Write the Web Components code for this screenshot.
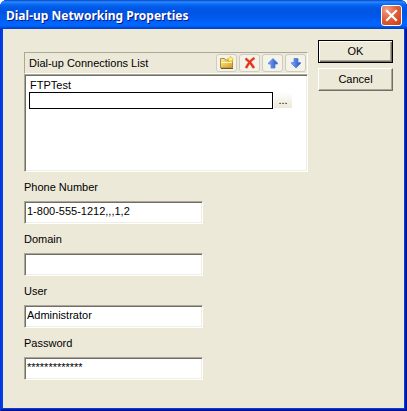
<!DOCTYPE html>
<html lang="en">
<head>
<meta charset="utf-8">
<title>Dial-up Networking Properties</title>
<style>
  body {
    margin: 0;
    background: #fff;
    color: #000;
    font-family: "Liberation Sans", Arial, sans-serif;
    font-size: 11px;
    line-height: 14px;
  }
  .fields {
    display: grid;
    gap: 8px;
    margin-top: 8px;
  }
</style>
</head>
<body>
<dialog-window caption="Dial-up Networking Properties">
  <connection-list label="Dial-up Connections List" item="FTPTest"></connection-list>
  <div class="fields">
    <text-field label="Phone Number" value="1-800-555-1212,,,1,2"></text-field>
    <text-field label="Domain"></text-field>
    <text-field label="User" value="Administrator"></text-field>
    <text-field label="Password" value="*************"></text-field>
  </div>
  <push-button slot="actions" default>OK</push-button>
  <push-button slot="actions">Cancel</push-button>
</dialog-window>

<script>
// Window frame with title bar
class DialogWindow extends HTMLElement {
  constructor() {
    super();
    const shadowRoot = this.attachShadow({ mode: "open" });
    shadowRoot.innerHTML = `
      <style>
        :host {
          display: flex;
          flex-direction: column;
          box-sizing: border-box;
          min-height: 100vh;
          padding: 0 3px 3px;
          background: #0040e6;
          box-shadow: inset 1px 0 #0831d9, inset -1px -1px #00138c, inset -2px -2px #001ea0;
          border-radius: 7px 7px 0 0;
          overflow: hidden;
        }
        header {
          display: flex;
          align-items: center;
          justify-content: space-between;
          height: 29px;
          margin: 0 -3px;
          padding: 2px 5px 0 6px;
          box-sizing: border-box;
          background: linear-gradient(#0842c4 0, #2b8bff 2px, #0a6cf5 4px, #0058e6 8px, #0054e3 13px, #005cf2 19px, #0066ff 24px, #0062f8 26px, #0048d0 28px, #003dc4 29px);
        }
        h1 {
          margin: 0;
          color: #fff;
          font: bold 12px/18px "Noto Sans", "Open Sans", sans-serif;
          text-shadow: 1px 1px #0a1883;
          white-space: nowrap;
        }
        .close {
          width: 21px;
          height: 21px;
          padding: 0;
          border: 1px solid #fff;
          border-radius: 3px;
          background: radial-gradient(circle at 25% 20%, #f0a088, #e2603c 45%, #c63c14);
        }
        .close svg {
          display: block;
          width: 19px;
          height: 19px;
        }
        main {
          flex: 1;
          display: flex;
          gap: 10px;
          padding: 11px 11px 20px 21px;
          background: #ece9d8;
        }
        .content {
          flex: 1;
          min-width: 0;
          padding-top: 12px;
        }
        .actions {
          display: flex;
          flex-direction: column;
          gap: 5px;
          width: 75px;
        }
      </style>
      <header>
        <h1></h1>
        <button class="close" type="button" aria-label="Close">
          <svg viewBox="0 0 19 19"><path d="M5 5l9 9M14 5l-9 9" stroke="#fff" stroke-width="2.2" stroke-linecap="square"/></svg>
        </button>
      </header>
      <main>
        <div class="content"><slot></slot></div>
        <div class="actions"><slot name="actions"></slot></div>
      </main>
    `;
    shadowRoot.querySelector("h1").textContent = this.getAttribute("caption") || "";
  }
}
customElements.define("dialog-window", DialogWindow);

// Classic raised button
class PushButton extends HTMLElement {
  constructor() {
    super();
    const shadowRoot = this.attachShadow({ mode: "open" });
    shadowRoot.innerHTML = `
      <style>
        :host {
          display: block;
        }
        button {
          display: block;
          width: 100%;
          height: 23px;
          padding: 0 0 2px;
          border: 1px solid;
          border-color: #fff #716f64 #716f64 #fff;
          background: #ece9d8;
          box-shadow: inset -1px -1px #aca899;
          color: #000;
          font: inherit;
        }
        :host([default]) button {
          border-color: #000;
          box-shadow: inset 1px 1px #fff, inset -1px -1px #716f64, inset -2px -2px #aca899;
        }
      </style>
      <button type="button"><slot></slot></button>
    `;
  }
}
customElements.define("push-button", PushButton);

// Small toolbar button with one of the icons below
const icons = {
  New: `
    <defs><linearGradient id="g" x2="1" y2="1"><stop stop-color="#fff0a0"/><stop offset="1" stop-color="#d29a20"/></linearGradient></defs>
    <path d="M1.500 3.500h4l1 1.500h7v8h-12z" fill="url(#g)" stroke="#b08a35"/>
    <path d="M2 13.500h12" stroke="#6b5a30"/>
    <path d="M2 7.500h11" stroke="#fff3b5"/>
    <path d="M11.500 1l1 2 2 .5-1.500 1.500.5 2-2-1-2 1 .5-2L8.500 3.500l2-.5z" fill="#fff27a" stroke="#e2b524" stroke-width=".6"/>`,
  Delete: `
    <path d="M3.500 3.500c3 2 6 5 8.500 9.500M12.500 3C9 5 6 9 4 13" fill="none" stroke="#f4a08c" stroke-width="3"/>
    <path d="M3.500 3.500c3 2 6 5 8.500 9.500M12.500 3C9 5 6 9 4 13" fill="none" stroke="#e3301a" stroke-width="2"/>`,
  Up: `
    <defs><linearGradient id="g" x2="1"><stop stop-color="#7fa8f5"/><stop offset="1" stop-color="#2450c0"/></linearGradient></defs>
    <path d="M8 3.500L12.500 8v1H10v4H6V9H3.500V8z" fill="url(#g)" stroke="#5580dc" stroke-width=".8"/>`,
  Down: `
    <defs><linearGradient id="g" x2="1"><stop stop-color="#7fa8f5"/><stop offset="1" stop-color="#2450c0"/></linearGradient></defs>
    <path d="M8 13L12.500 8.500v-1H10v-4H6v4H3.500v1z" fill="url(#g)" stroke="#5580dc" stroke-width=".8"/>`
};

class ToolButton extends HTMLElement {
  constructor() {
    super();
    const name = this.getAttribute("icon");
    const shadowRoot = this.attachShadow({ mode: "open" });
    shadowRoot.innerHTML = `
      <style>
        :host {
          display: block;
        }
        button {
          display: grid;
          place-items: center;
          width: 21px;
          height: 18px;
          padding: 0;
          border: 1px solid #cfccbe;
          border-radius: 3px;
          background: #f4f3ea;
        }
        svg {
          display: block;
          width: 16px;
          height: 16px;
        }
      </style>
      <button type="button" aria-label="${name}"><svg viewBox="0 0 16 16">${icons[name]}</svg></button>
    `;
  }
}
customElements.define("tool-button", ToolButton);

// List of connections, the last row is being edited
class ConnectionList extends HTMLElement {
  constructor() {
    super();
    const shadowRoot = this.attachShadow({ mode: "open" });
    shadowRoot.innerHTML = `
      <style>
        :host {
          display: block;
        }
        .bar {
          display: flex;
          align-items: center;
          gap: 2px;
          height: 22px;
          box-sizing: border-box;
          padding: 0 1px 0 4px;
          border: 1px solid;
          border-color: #aca899 #fff #fff #aca899;
        }
        .bar span {
          flex: 1;
        }
        .list {
          height: 98px;
          box-sizing: border-box;
          padding: 3px 15px 3px 4px;
          border: 1px solid;
          border-color: #aca899 #fff #fff #aca899;
          background: #fff;
          box-shadow: inset 1px 1px #716f64, inset -1px -1px #f1efe2;
        }
        .item {
          padding-left: 1px;
        }
        .edit {
          display: flex;
          gap: 1px;
        }
        input {
          flex: 1;
          min-width: 0;
          height: 17px;
          box-sizing: border-box;
          padding: 0 2px;
          border: 1px solid #000;
          background: #fff;
          font: inherit;
          outline: none;
        }
        .edit button {
          width: 18px;
          height: 16px;
          padding: 0;
          border: 0;
          background: linear-gradient(#fff, #ece9d8);
          color: #000;
          font: inherit;
        }
      </style>
      <div class="bar">
        <span></span>
        <tool-button icon="New"></tool-button>
        <tool-button icon="Delete"></tool-button>
        <tool-button icon="Up"></tool-button>
        <tool-button icon="Down"></tool-button>
      </div>
      <div class="list">
        <div class="item"></div>
        <div class="edit">
          <input type="text" aria-label="Connection name">
          <button type="button">...</button>
        </div>
      </div>
    `;
    shadowRoot.querySelector(".bar span").textContent = this.getAttribute("label") || "";
    shadowRoot.querySelector(".item").textContent = this.getAttribute("item") || "";
  }
}
customElements.define("connection-list", ConnectionList);

// Label above a sunken text box
class TextField extends HTMLElement {
  constructor() {
    super();
    const shadowRoot = this.attachShadow({ mode: "open" });
    shadowRoot.innerHTML = `
      <style>
        :host {
          display: block;
          max-width: 179px;
        }
        label {
          display: block;
          margin-bottom: 7px;
        }
        input {
          display: block;
          width: 100%;
          height: 23px;
          box-sizing: border-box;
          padding: 0 2px 3px;
          border: 1px solid;
          border-color: #aca899 #fff #fff #aca899;
          background: #fff;
          box-shadow: inset 1px 1px #716f64, inset -1px -1px #f1efe2;
          color: #000;
          font: inherit;
          outline: none;
        }
      </style>
      <label for="box"></label>
      <input id="box" type="text" spellcheck="false" autocomplete="off">
    `;
    shadowRoot.querySelector("label").textContent = this.getAttribute("label") || "";
    shadowRoot.querySelector("input").value = this.getAttribute("value") || "";
  }
}
customElements.define("text-field", TextField);
</script>
</body>
</html>
